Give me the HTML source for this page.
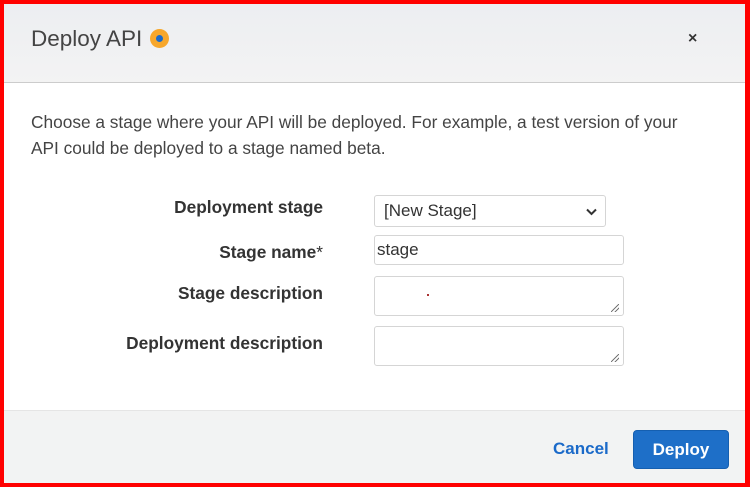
<!DOCTYPE html>
<html><head><style>
*{margin:0;padding:0;box-sizing:border-box}
body{width:750px;height:487px;background:#f00;font-family:"Liberation Sans",Arial,sans-serif;position:relative;overflow:hidden}
.m{position:absolute;left:4px;top:4px;width:741px;height:479px;background:#fff}
.h{position:absolute;left:0;top:0;width:741px;height:79px;background:linear-gradient(#eceef2,#f3f3f3);border-bottom:1px solid #ccc}
.t{position:absolute;left:27px;top:22px;font-size:22.5px;color:#444}
.dot{position:absolute;left:146px;top:25px;width:19px;height:19px;border-radius:50%;background:#f7a72b}
.dot:after{content:"";position:absolute;left:6px;top:6px;width:7px;height:7px;border-radius:50%;background:#1b6ac9}
.x{position:absolute;left:684px;top:26px;font-size:16px;color:#333;font-weight:bold}
.p{position:absolute;left:27px;top:105px;font-size:17.3px;line-height:26px;color:#444;width:665px}
.l{position:absolute;right:422px;font-size:17.3px;font-weight:bold;color:#333;text-align:right}
.i{position:absolute;left:370px;width:250px;border:1px solid #d5d5d5;border-radius:3px;background:#fff;font-size:17px;color:#333}
.g{position:absolute;right:4px;bottom:3px;width:8px;height:8px;background:linear-gradient(135deg,transparent 45%,#777 45%,#777 55%,transparent 55%,transparent 70%,#777 70%,#777 80%,transparent 80%)}
.f{position:absolute;left:0;top:406px;width:741px;height:73px;background:#f2f3f3;border-top:1px solid #e5e5e5}
.c{position:absolute;left:549px;top:435px;font-size:17px;font-weight:bold;color:#1b6ac9}
.b{position:absolute;left:629px;top:426px;width:96px;height:39px;background:#1e6fc8;border:1px solid #155fb0;border-radius:4px;color:#fff;font-size:17px;font-weight:bold;text-align:center;line-height:37px}
</style></head><body>
<div class="m">
<div class="h"><div class="t">Deploy API</div><div class="dot"></div><div class="x">×</div></div>
<div class="p">Choose a stage where your API will be deployed. For example, a test version of your API could be deployed to a stage named beta.</div>
<div class="l" style="top:193px">Deployment stage</div>
<div class="l" style="top:238px">Stage name<span style="font-weight:normal">*</span></div>
<div class="l" style="top:279px">Stage description</div>
<div class="l" style="top:329px">Deployment description</div>
<div class="i" style="top:191px;width:232px;height:32px;padding:5px 0 0 9px">[New Stage]<svg style="position:absolute;right:8px;top:12px" width="11" height="8" viewBox="0 0 11 8"><path d="M1 1.5L5.5 6 10 1.5" stroke="#333" stroke-width="2" fill="none"/></svg></div>
<div class="i" style="top:231px;height:30px;padding:4px 0 0 2px">stage</div>
<div class="i" style="top:272px;height:40px"><div style="position:absolute;left:52px;top:17px;width:2px;height:2px;background:#a33"></div><div class="g"></div></div>
<div class="i" style="top:322px;height:40px"><div class="g"></div></div>
<div class="f"></div>
<div class="c">Cancel</div>
<div class="b">Deploy</div>
</div>
</body></html>
